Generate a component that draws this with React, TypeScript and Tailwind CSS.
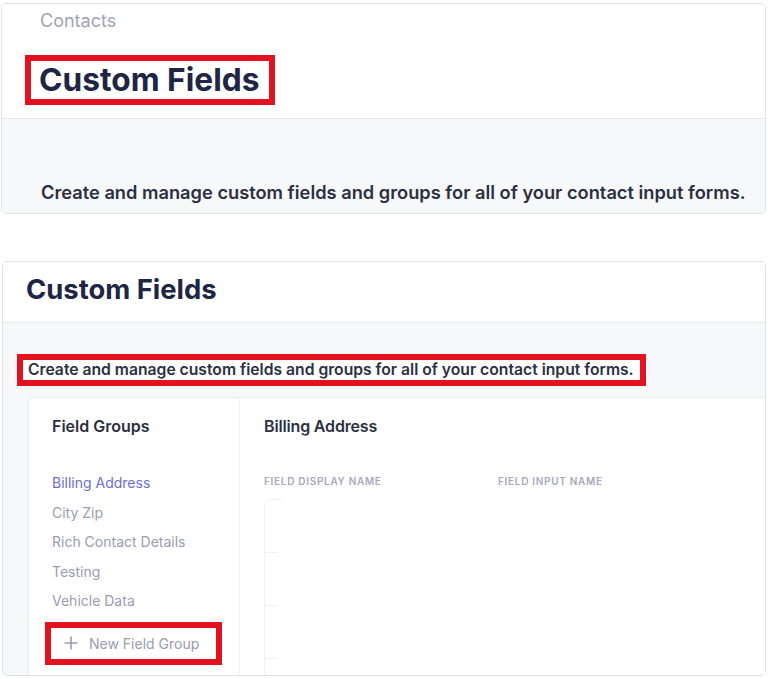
import React from "react";

/* ================= Types ================= */
type Group = {
    key: string;
    label: string;
    active?: boolean;
};

const groups: Group[] = [
    { key: "billing", label: "Billing Address", active: true },
    { key: "city", label: "City Zip" },
    { key: "rich", label: "Rich Contact Details" },
    { key: "testing", label: "Testing" },
    { key: "vehicle", label: "Vehicle Data" },
];

const DESC = "Create and manage custom fields and groups for all of your contact input forms.";

/* ================= Component ================= */
export default function App() {
    return (
        <div
            className="w-[768px] h-[679px] bg-white overflow-hidden pt-[3px]"
            style={{ fontFamily: "Inter, 'Noto Sans', sans-serif" }}
        >
            {/* Top snapshot */}
            <section className="ml-[1px] w-[765px] rounded-[5px] border border-[#dfe2e7] overflow-hidden">
                <div className="bg-white pb-[13px]">
                    <div className="pl-[38px] pt-[5px] h-[29px] text-[18px] leading-[24px] text-[#9fa3ba]">
                        Contacts
                    </div>
                    <div className="ml-[23px] mt-[22px] inline-block border-[6px] border-[#e3121f] pl-[8px] pr-[10px]">
                        <h1 className="text-[31.7px] leading-[38px] font-bold text-[#1f2544]">
                            Custom Fields
                        </h1>
                    </div>
                </div>
                <div className="border-t border-[#e6e8ec] bg-[#f7f8fa] pl-[39px] pt-[61px] pb-[9px]">
                    <p className="text-[18.25px] leading-[24px] font-semibold text-[#2b3042] whitespace-nowrap">
                        {DESC}
                    </p>
                </div>
            </section>

            {/* Bottom snapshot */}
            <section className="ml-[2px] mt-[47px] w-[764px] h-[415px] rounded-[5px] border border-[#dfe2e7] overflow-hidden flex flex-col">
                <div className="bg-white pl-[23px] pt-[10px] pb-[16px]">
                    <h2 className="text-[27.4px] leading-[34px] font-bold text-[#1f2544]">
                        Custom Fields
                    </h2>
                </div>
                <div className="flex-1 border-t border-[#e6e8ec] bg-[#f7f8fa] flex flex-col min-h-0">
                    <div className="ml-[14px] mt-[31px] self-start border-[6px] border-[#e3121f] bg-white pl-[5px] pr-[6px]">
                        <p className="text-[15.7px] leading-[20px] font-semibold text-[#2b3042] whitespace-nowrap">
                            {DESC}
                        </p>
                    </div>

                    <div className="ml-[25px] mt-[11px] flex-1 flex bg-white border-l border-t border-[#e8eaee] rounded-tl-[5px] min-h-0">
                        {/* Field groups column */}
                        <aside className="w-[211px] border-r border-[#eceef1] pl-[23px] pt-[16px] flex flex-col">
                            <h3 className="text-[16px] leading-[24px] font-semibold text-[#2b3042]">
                                Field Groups
                            </h3>
                            <ul className="mt-[30px] flex flex-col">
                                {groups.map((g) => (
                                    <li
                                        key={g.key}
                                        className={
                                            g.active
                                                ? "h-[29.5px] flex items-center text-[14px] text-[#6b6fd0]"
                                                : "h-[29.5px] flex items-center text-[14px] text-[#9a9cb2]"
                                        }
                                    >
                                        {g.label}
                                    </li>
                                ))}
                            </ul>
                            <button className="-ml-[7px] mt-[6px] self-start w-[177px] h-[43px] border-[6px] border-[#e3121f] bg-white flex items-center gap-[11px] pl-[13px] text-[14px] text-[#9a9cb2]">
                                <svg width="14" height="14" viewBox="0 0 14 14" fill="none">
                                    <path d="M7 0.5v13M0.5 7h13" stroke="#9a9cb2" strokeWidth="1.6" />
                                </svg>
                                New Field Group
                            </button>
                        </aside>

                        {/* Fields panel */}
                        <div className="flex-1 pl-[24px] pt-[16px] flex flex-col">
                            <h3 className="text-[16px] leading-[24px] font-semibold text-[#2b3042] tracking-[-0.01em]">
                                Billing Address
                            </h3>
                            <div className="mt-[36px] flex text-[10px] leading-[14px] font-semibold tracking-[0.07em] text-[#a6a8bb]">
                                <span className="w-[234px]">FIELD DISPLAY NAME</span>
                                <span>FIELD INPUT NAME</span>
                            </div>
                            <div className="mt-[11px] flex-1 border-l border-t border-[#f0f1f4] rounded-tl-[6px] w-[18px] flex flex-col">
                                {[0, 1, 2, 3].map((i) => (
                                    <div key={i} className="h-[53px] border-b border-[#eef0f3] w-[12px] shrink-0" />
                                ))}
                            </div>
                        </div>
                    </div>
                </div>
            </section>
        </div>
    );
}
